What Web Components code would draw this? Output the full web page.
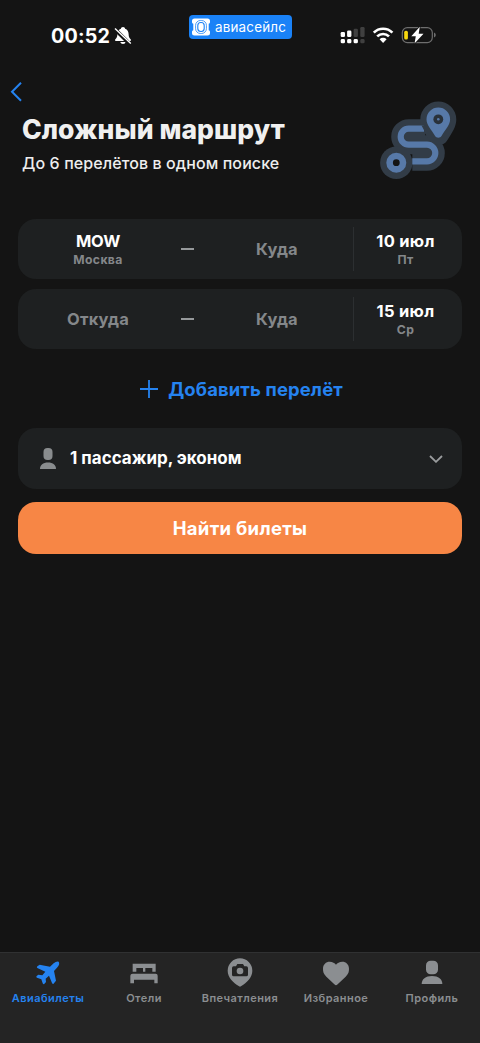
<!DOCTYPE html>
<html lang="ru">
<head>
<meta charset="utf-8">
<title>Сложный маршрут</title>
<style>
  html, body { margin: 0; height: 100%; background: #141414; }
  body { font-family: Inter, "Liberation Sans", sans-serif; overflow: hidden; }
</style>
</head>
<body>
<route-app></route-app>
<script>
const define = (name, html) => {
  const t = document.createElement('template');
  t.innerHTML = html;
  customElements.define(name, class extends HTMLElement {
    constructor() {
      super();
      this.attachShadow({ mode: 'open' }).append(t.content.cloneNode(true));
    }
  });
};

define('status-bar', `
<style>
  :host { display: grid; grid-template-columns: 188px 104px 1fr; height: 72px; box-sizing: border-box; color: #fff; }
  .left { display: flex; padding: 26px 0 0 51px; gap: 4px; align-items: flex-start; }
  .time { font-size: 19.7px; font-weight: 700; line-height: 20px; letter-spacing: .2px; }
  .brand { margin: 15px 0 0 .5px; width: 103px; height: 24px; background: #1a82f7; border-radius: 4px; display: flex; align-items: center; gap: 5.500px; padding-left: 3px; box-sizing: border-box; font-size: 13.4px; letter-spacing: .2px; line-height: 24px; }
  .brand span { margin-bottom: 1px; }
  .right { display: flex; padding: 26px 0 0 48px; align-items: flex-start; }
  svg { display: block; flex: none; }
</style>
<div class="left"><span class="time">00:52</span>
  <svg width="18" height="20" viewBox="0 0 18 20"><path d="M9 1C7.800 1 7 1.800 6.900 2.700 4.600 3.500 3.500 5.400 3.400 8c-.1 3-.7 3.900-2 5.200-.7.700-.5 1.800.6 1.800h14c1.100 0 1.300-1.100.6-1.800-1.300-1.300-1.900-2.200-2-5.200-.1-2.600-1.200-4.500-3.500-5.300C11 1.800 10.200 1 9 1zM6.300 16h5.400c-.3 1.300-1.400 2-2.700 2s-2.400-.7-2.700-2z" fill="#fff"/><path d="M.8 3.200 16.200 18.400" stroke="#141414" stroke-width="3.800"/><path d="M1 2.400 16.800 17.600" stroke="#fff" stroke-width="1.400"/></svg>
</div>
<div class="brand">
  <svg width="18" height="18" viewBox="0 0 18 18"><path d="M2.500 .5H15.500Q18 .5 18 3V4.200Q18 5.500 16.700 5.700V12.300Q18 12.500 18 13.800V15Q18 17.500 15.500 17.500H2.500Q0 17.500 0 15V13.800Q0 12.500 1.300 12.300V5.700Q0 5.500 0 4.200V3Q0 .5 2.500 .5Z" fill="#fff"/><rect x="3.600" y="2.500" width="10.800" height="13" rx="4.800" fill="none" stroke="#1a82f7" stroke-width=".8"/><rect x="5.800" y="4.500" width="6.400" height="9" rx="3" fill="none" stroke="#1a82f7" stroke-width="1.100"/></svg>
  <span>авиасейлс</span>
</div>
<div class="right">
  <svg width="97" height="20" viewBox="0 0 97 20">
    <g fill="#fff"><rect x=".7" y="6" width="4.300" height="5" rx="1.300"/><rect x="7.100" y="4.500" width="4.300" height="6.500" rx="1.300"/><rect x=".7" y="13" width="4.300" height="4.300" rx="1.400"/><rect x="7.100" y="13" width="4.300" height="4.300" rx="1.400"/><rect x="13.600" y="13" width="4.300" height="4.300" rx="1.400"/></g>
    <g fill="#404040"><rect x="13.600" y="2.700" width="4.300" height="8.300" rx="1.300"/><rect x="20.300" y="1" width="4.300" height="10" rx="1.300"/><rect x="20.300" y="13" width="4.300" height="4.300" rx="1.400"/></g>
    <g fill="none" stroke="#fff" stroke-width="2.700"><path d="M33.800 6.600a13.200 13.200 0 0 1 18.600 0"/><path d="M37.200 10.400a8.400 8.400 0 0 1 11.800 0"/></g>
    <path d="M39.600 13.300a5 5 0 0 1 7 0L43.100 17z" fill="#fff"/>
    <rect x="62.300" y="1.600" width="30" height="15" rx="5" fill="none" stroke="#6e6e6e" stroke-width="1.200"/><path d="M94 6.600q1.800.8 1.800 2.500T94 11.600z" fill="#6e6e6e"/>
    <rect x="64.200" y="4.700" width="3.700" height="8.700" rx="1.500" fill="#f8d80e"/>
    <path d="M79.800.8 71.300 10.200H75.800L74.500 17.400 83.500 7.800H78.700z" fill="#fff" stroke="#141414" stroke-width="1.600" paint-order="stroke"/>
  </svg>
</div>`);

define('route-art', `
<style>:host { display: block; margin-top: -9px; } svg { display: block; }</style>
<svg width="78" height="80" viewBox="0 0 78 80" fill="none">
  <path d="M45 27.700H28.700a8 8 0 0 0 0 16H47a8.300 8.300 0 0 1 0 16.600H32.300" stroke="#323c47" stroke-width="19"/>
  <circle cx="16.300" cy="61.700" r="16.200" fill="#323c47"/>
  <path d="M58.300.4a18 18 0 0 1 18 18c0 7-4 13-9.500 21.500-3 5.500-14 5.500-17 0-5.500-8.500-9.500-14.500-9.500-21.500a18 18 0 0 1 18-18z" fill="#323c47"/>
  <path d="M44 27.700H28.700a8 8 0 0 0 0 16H47a8.300 8.300 0 0 1 0 16.600H32.300" stroke="#5779a8" stroke-width="6.200"/>
  <path d="M41.500 24.600 45 31H46V24z" fill="#323c47"/>
  <circle cx="16.300" cy="61.700" r="6.700" fill="#141414" stroke="#5779a8" stroke-width="6.600"/>
  <path d="M58.300 6.600a11.800 11.800 0 0 1 11.800 11.800c0 5.500-5 10-8.600 16.600-1.200 2.200-5.200 2.200-6.400 0-3.600-6.600-8.600-11.100-8.600-16.600A11.800 11.800 0 0 1 58.300 6.600z" fill="#5779a8"/>
  <circle cx="58.300" cy="18.300" r="4.900" fill="#29313a"/><circle cx="58.300" cy="18.300" r="1.300" fill="#5779a8"/>
</svg>`);

define('flight-leg', `
<style>
  :host { display: grid; grid-template-columns: 160px 23px 152px 1fr; height: 60px; background: #1e2021; border-radius: 18px; align-items: center; text-align: center; color: #84878a; font-size: 16.500px; font-weight: 700; line-height: 20px; letter-spacing: .2px; }
  .dash { width: 13px; height: 1.500px; margin-left: 3px; background: #96999b; }
  .date { height: 44px; border-left: 1px solid #2c2f31; display: grid; align-content: center; padding-right: 5px; letter-spacing: .3px; }
</style>
<slot name="from"></slot><div class="dash"></div><slot name="to"></slot><div class="date"><slot name="date"></slot></div>`);

define('place-label', `
<style>
  :host { display: block; }
  :host([set]) { padding-top: 2px; }
  :host([slot="from"][set]) { letter-spacing: -.3px; }
  :host([set]) .m { color: #fff; }
  ::slotted(small) { display: block; font-size: 12.200px; line-height: 18px; font-weight: 700; letter-spacing: .35px; }
</style>
<div class="m"><slot></slot></div><slot name="sub"></slot>`);

define('tab-item', `
<style>
  :host { display: flex; flex-direction: column; align-items: center; color: #8b8e91; font-size: 11px; font-weight: 600; letter-spacing: .45px; line-height: 14px; white-space: nowrap; }
  :host([active]) { color: #2583f0; }
  .i { height: 38px; }
  ::slotted(svg) { display: block; fill: currentColor; }
</style>
<div class="i"><slot name="icon"></slot></div><span><slot></slot></span>`);

define('route-app', `
<style>
  :host { display: flex; flex-direction: column; height: 1043px; width: 480px; background: #141414; color: #f0f0f0; }
  svg { display: block; flex: none; }
  .nav { height: 38px; padding: 9px 0 0 10px; box-sizing: border-box; }
  header { display: grid; grid-template-columns: 358px 1fr; height: 109px; padding-left: 22px; }
  h1 { margin: 4px 0 0; font-size: 26.500px; line-height: 30px; font-weight: 800; letter-spacing: .05px; white-space: nowrap; }
  p { margin: 11px 0 0; font-size: 16px; line-height: 16px; font-weight: 500; letter-spacing: .1px; color: #eee; }
  main { padding: 0 18px; display: flex; flex-direction: column; flex: 1; }
  .legs { display: flex; flex-direction: column; gap: 10px; }
  .add { height: 79px; display: flex; align-items: center; justify-content: center; gap: 10px; color: #2583f0; font-size: 18.400px; font-weight: 700; letter-spacing: .15px; padding-left: 3px; }
  .pax { height: 61px; border-radius: 18px; background: #1e2021; display: flex; align-items: center; padding: 0 19px 0 22px; font-size: 17px; font-weight: 700; color: #fff; }
  .pax span { flex: 1; margin: 0 0 1px 14px; }
  .go { margin-top: 13px; height: 52px; border-radius: 18px; background: #f78645; color: #fff; font-size: 18.500px; font-weight: 700; letter-spacing: .3px; display: grid; place-items: center; }
  nav { height: 91px; box-sizing: border-box; border-top: 1px solid #303132; background: #242424; display: grid; grid-template-columns: repeat(5, 96px); }
</style>
<status-bar></status-bar>
<div class="nav"><svg width="14" height="22" viewBox="0 0 14 22"><path d="M11 1.800 2 10.700 11 19.800" fill="none" stroke="#2583f0" stroke-width="2"/></svg></div>
<header><div><h1>Сложный маршрут</h1><p>До 6 перелётов в одном поиске</p></div><route-art></route-art></header>
<main>
  <div class="legs">
    <flight-leg><place-label slot="from" set>MOW<small slot="sub">Москва</small></place-label><place-label slot="to">Куда</place-label><place-label slot="date" set>10 июл<small slot="sub">Пт</small></place-label></flight-leg>
    <flight-leg><place-label slot="from">Откуда</place-label><place-label slot="to">Куда</place-label><place-label slot="date" set>15 июл<small slot="sub">Ср</small></place-label></flight-leg>
  </div>
  <div class="add"><svg width="18" height="18" viewBox="0 0 18 18"><path d="M9 0V18M0 9H18" stroke="#2583f0" stroke-width="1.800"/></svg><span>Добавить перелёт</span></div>
  <div class="pax"><svg width="16" height="21" viewBox="0 0 16 21" fill="#898c8e"><rect x="3.500" width="9" height="12" rx="4"/><path d="M0 21c0-4 3-6.500 8-6.500s8 2.500 8 6.500z"/></svg><span>1 пассажир, эконом</span><svg width="14" height="8" viewBox="0 0 14 8"><path d="M1 1 7 6.800 13 1" fill="none" stroke="#9a9c9e" stroke-width="1.800"/></svg></div>
  <div class="go">Найти билеты</div>
</main>
<nav>
  <tab-item active><svg slot="icon" width="96" height="38" viewBox="0 39 288 114"><path d="M176 65Q181 72 171 83L162 93 168 122 160 132Q157 132 156 129L147 107 137 116 138 126 132 133Q129 133 128 130L124 118 111 113Q107 111 110 108L115 104 127 106 136 95 112 84Q109 82 112 79L119 74 150 80 161 70Q169 63 176 65Z"/></svg>Авиабилеты</tab-item>
  <tab-item><svg slot="icon" width="96" height="38" viewBox="288 39 288 114"><path d="M398 71H467V95H457V84H436V95H429V84H409V95H398ZM398 101H467Q473 101 473 107V130H463V119H402V130H391V107Q391 101 398 101Z"/></svg>Отели</tab-item>
  <tab-item><svg slot="icon" width="96" height="38" viewBox="576 39 288 114"><path d="M720 55A37 37 0 0 1 757 92C757 113 740 127 724 138Q720 141 716 138C700 127 683 113 683 92A37 37 0 0 1 720 55Z"/><path d="M700 79H708L712 72H729L733 79H739Q744 79 744 84V104Q744 109 739 109H701Q696 109 696 104V84Q696 79 701 79Z" fill="#242424"/><circle cx="720" cy="93" r="10"/></svg>Впечатления</tab-item>
  <tab-item><svg slot="icon" width="96" height="38" viewBox="864 39 288 114"><path d="M1008 136Q1006 136 1003 133L979 110C970 101 969 94 969 86 969 73 978 65 989 65 998 65 1004 69 1008 74 1012 69 1018 65 1027 65 1038 65 1047 73 1047 86 1047 94 1046 101 1037 110L1013 133Q1010 136 1008 136Z"/></svg>Избранное</tab-item>
  <tab-item><svg slot="icon" width="96" height="38" viewBox="1152 39 288 114"><rect x="1278" y="62" width="36" height="41" rx="14"/><path d="M1265 132C1265 117 1277 108 1296 108S1327 117 1327 132Z"/></svg>Профиль</tab-item>
</nav>`);
</script>
</body>
</html>
